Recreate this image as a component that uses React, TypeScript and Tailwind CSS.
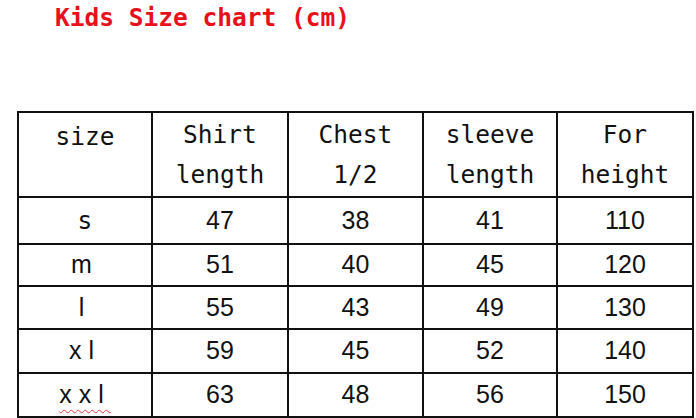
const rows = [
  { size: 's', shirt: '47', chest: '38', sleeve: '41', height: '110', h: 'h-[47px]' },
  { size: 'm', shirt: '51', chest: '40', sleeve: '45', height: '120', h: 'h-[42px]' },
  { size: 'l', shirt: '55', chest: '43', sleeve: '49', height: '130', h: 'h-[43px]' },
  { size: 'xl', shirt: '59', chest: '45', sleeve: '52', height: '140', h: 'h-[44px]' },
  { size: 'xxl', shirt: '63', chest: '48', sleeve: '56', height: '150', h: 'h-[44px]' },
];

const cell = 'border-2 border-[#111] text-center align-middle p-0';
const mono = "font-['DejaVu_Sans_Mono',monospace]";
const num = "font-['Liberation_Sans',Arial,sans-serif] text-[25px] text-[#111]";

export default function App() {
  return (
    <div className="h-[418px] w-[696px] overflow-hidden bg-white">
      <h1
        className={`${mono} pl-[55px] pt-[3px] text-[24.5px] leading-[30px] font-bold text-[#e8101a]`}
      >
        Kids Size chart (cm)
      </h1>
      <table className="mt-[78px] ml-[17px] w-[675px] table-fixed border-collapse">
        <colgroup>
          <col className="w-[134px]" />
          <col className="w-[136px]" />
          <col className="w-[135px]" />
          <col className="w-[134px]" />
          <col className="w-[136px]" />
        </colgroup>
        <thead>
          <tr className={`h-[85px] ${mono} text-[24.5px] leading-[40px] text-[#111]`}>
            <th className={`${cell} align-top pt-[4px] font-normal`}>size</th>
            <th className={`${cell} font-normal`}>
              Shirt
              <br />
              length
            </th>
            <th className={`${cell} font-normal`}>
              Chest
              <br />
              1/2
            </th>
            <th className={`${cell} font-normal`}>
              sleeve
              <br />
              length
            </th>
            <th className={`${cell} font-normal`}>
              For
              <br />
              height
            </th>
          </tr>
        </thead>
        <tbody>
          {rows.map((r) => (
            <tr key={r.size} className={r.h}>
              <td className={`${cell} ${num}`}>
                {r.size === 's' ? (
                  <span className={`${mono} text-[24.5px]`}>s</span>
                ) : r.size === 'xxl' ? (
                  <span className="tracking-[7px] underline decoration-wavy decoration-[#e04040] decoration-1 underline-offset-[6px]">
                    xxl
                  </span>
                ) : (
                  <span className="tracking-[7px]">{r.size}</span>
                )}
              </td>
              <td className={`${cell} ${num}`}>{r.shirt}</td>
              <td className={`${cell} ${num}`}>{r.chest}</td>
              <td className={`${cell} ${num}`}>{r.sleeve}</td>
              <td className={`${cell} ${num}`}>{r.height}</td>
            </tr>
          ))}
          <tr className="h-[44px]">
            <td className={cell}></td>
            <td className={cell}></td>
            <td className={cell}></td>
            <td className={cell}></td>
            <td className={cell}></td>
          </tr>
        </tbody>
      </table>
    </div>
  );
}
